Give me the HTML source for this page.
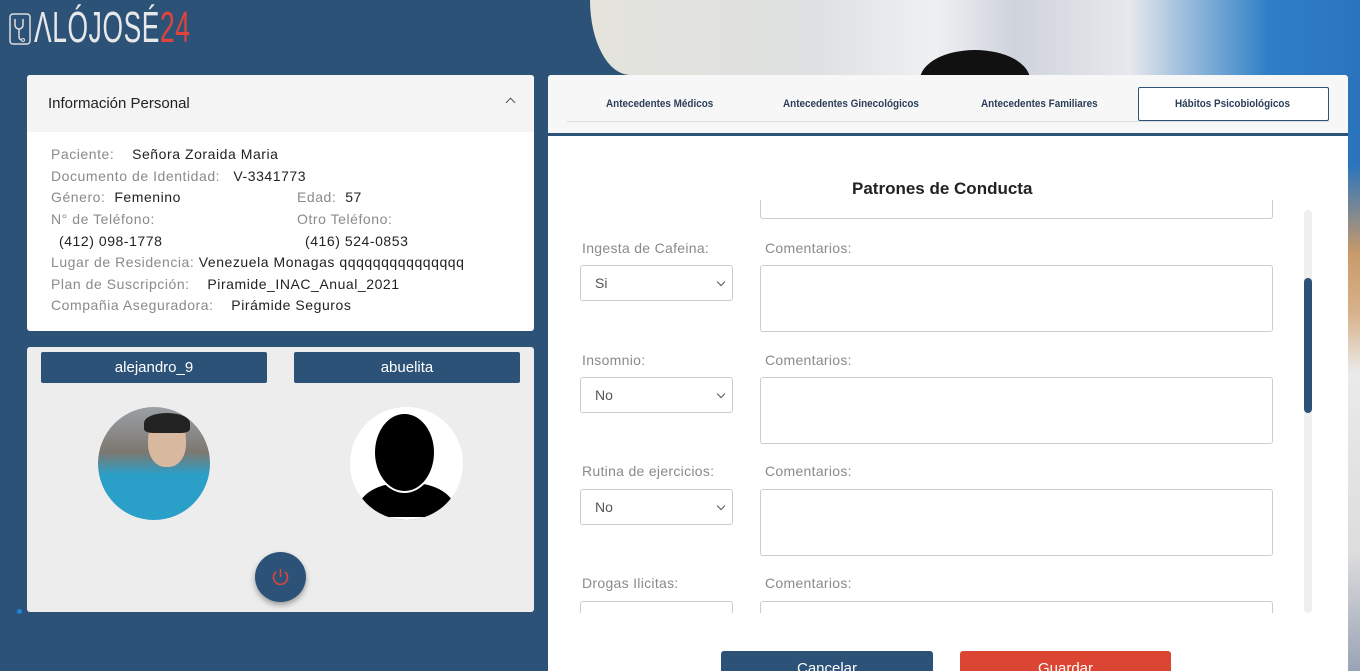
<!DOCTYPE html>
<html><head><meta charset="utf-8"><style>
*{box-sizing:border-box;margin:0;padding:0}
html,body{width:1360px;height:671px;overflow:hidden}
body{background:#2c5278;font-family:"Liberation Sans","DejaVu Sans",sans-serif;position:relative}
.abs{position:absolute}
.lbl{color:#8a8a8a}
.info div{position:absolute;font-size:14px;color:#222;white-space:nowrap;letter-spacing:.55px}
.tab{position:absolute;top:98px;font-size:11px;color:#2c3e5a;font-weight:bold;transform:scaleX(.9);transform-origin:left}
.fl{position:absolute;font-size:14px;color:#8a8a8a;letter-spacing:.3px}
.sel{position:absolute;left:580px;width:153px;height:36px;border:1px solid #ccc;border-radius:3px;font-size:14px;color:#555;padding:9px 14px}
.sel:after{content:"";position:absolute;right:8px;top:13px;width:5px;height:5px;border-right:1.5px solid #555;border-bottom:1.5px solid #555;transform:rotate(45deg)}
.ta{position:absolute;left:760px;width:513px;height:67px;border:1px solid #ccc;border-radius:3px}
</style></head><body>
<div class="abs" style="left:590px;top:0;width:770px;height:75px;background:linear-gradient(90deg,#e4e3dc 0%,#dfe1e2 30%,#eef0f2 45%,#cfd3dc 55%,#e7e8ec 70%,#2f7fc6 88%,#2a74bd 100%);border-bottom-left-radius:40px 75px"></div>
<div class="abs" style="left:920px;top:50px;width:110px;height:60px;border-radius:50%;background:#111"></div>
<div class="abs" style="left:1348px;top:75px;width:12px;height:596px;background:linear-gradient(180deg,#2a74bd 0%,#2a74bd 15%,#c99a6a 30%,#d8b28a 40%,#eaeaea 50%,#ddd 80%,#9aa3b5 100%)"></div>
<svg class="abs" style="left:9px;top:13px" width="22" height="34" viewBox="0 0 22 34"><rect x="1" y="1" width="20" height="30" rx="3" fill="none" stroke="#ddd" stroke-width="1.5"/><path d="M6 6v6a4 4 0 0 0 8 0V6M10 16v8a3 3 0 0 0 3 3" fill="none" stroke="#ddd" stroke-width="1.5"/><circle cx="14" cy="27" r="1.5" fill="none" stroke="#ddd"/></svg>
<div class="abs" style="left:34px;top:3px;font-size:44px;line-height:50px;color:#e8e8e8;letter-spacing:1px;transform:scaleX(.6);transform-origin:left;font-weight:300">ΛLÓJOSÉ<span style="color:#e0443a">24</span></div>
<div class="abs" style="left:27px;top:75px;width:507px;height:256px;background:#fff;border-radius:3px;overflow:hidden">
<div style="height:57px;background:#f4f4f4;padding:20px 21px;font-size:15px;color:#222">Información Personal<span style="position:absolute;right:20px;width:7px;height:7px;border-left:1.5px solid #555;border-top:1.5px solid #555;transform:rotate(45deg);top:24px"></span></div>
</div>
<div class="info">
<div style="left:51px;top:146px"><span class="lbl">Paciente:</span>&nbsp;&nbsp;&nbsp; Señora Zoraida Maria</div>
<div style="left:51px;top:168px"><span class="lbl">Documento de Identidad:</span>&nbsp;&nbsp; V-3341773</div>
<div style="left:51px;top:189px"><span class="lbl">Género:</span>&nbsp; Femenino</div>
<div style="left:297px;top:189px"><span class="lbl">Edad:</span>&nbsp; 57</div>
<div style="left:51px;top:211px"><span class="lbl">N° de Teléfono:</span></div>
<div style="left:297px;top:211px"><span class="lbl">Otro Teléfono:</span></div>
<div style="left:59px;top:233px">(412) 098-1778</div>
<div style="left:305px;top:233px">(416) 524-0853</div>
<div style="left:51px;top:254px"><span class="lbl">Lugar de Residencia:</span> Venezuela Monagas qqqqqqqqqqqqqqq</div>
<div style="left:51px;top:276px"><span class="lbl">Plan de Suscripción:</span>&nbsp;&nbsp;&nbsp; Piramide_INAC_Anual_2021</div>
<div style="left:51px;top:297px"><span class="lbl">Compañia Aseguradora:</span>&nbsp;&nbsp;&nbsp; Pirámide Seguros</div>
</div>
<div class="abs" style="left:27px;top:347px;width:507px;height:265px;background:#ededed;border-radius:3px"></div>
<div class="abs" style="left:41px;top:352px;width:226px;height:31px;background:#2c5278;border-radius:2px;color:#fff;font-size:15px;text-align:center;line-height:31px">alejandro_9</div>
<div class="abs" style="left:294px;top:352px;width:226px;height:31px;background:#2c5278;border-radius:2px;color:#fff;font-size:15px;text-align:center;line-height:31px">abuelita</div>
<div class="abs" style="left:98px;top:407px;width:112px;height:113px;border-radius:50%;overflow:hidden;background:linear-gradient(180deg,#9aa0a6 0%,#7d7870 40%,#2a9fc8 60%,#2a9fc8 100%)"><div style="position:absolute;left:50px;top:10px;width:38px;height:50px;border-radius:45%;background:#d9b8a0"></div><div style="position:absolute;left:46px;top:6px;width:46px;height:20px;border-radius:50% 50% 20% 20%;background:#222"></div></div>
<div class="abs" style="left:350px;top:407px;width:113px;height:113px;border-radius:50%;overflow:hidden;background:#fff"><div style="position:absolute;left:8px;top:76px;width:97px;height:60px;border-radius:45% 45% 0 0;background:#000"></div><div style="position:absolute;left:23px;top:5px;width:63px;height:81px;border-radius:50%;background:#fff"></div><div style="position:absolute;left:25px;top:7px;width:59px;height:77px;border-radius:50%;background:#000"></div><div style="position:absolute;left:0;top:110px;width:113px;height:10px;background:#fff"></div></div>
<div class="abs" style="left:255px;top:552px;width:51px;height:50px;border-radius:50%;background:#2c5278;box-shadow:0 3px 6px rgba(0,0,0,.35)"><svg width="51" height="50" viewBox="0 0 51 50"><path d="M21 20a7 7 0 1 0 9 0" fill="none" stroke="#e0443a" stroke-width="1.6"/><path d="M25.5 17v8" stroke="#e0443a" stroke-width="1.6"/></svg></div>
<div class="abs" style="left:17px;top:609px;width:5px;height:5px;border-radius:50%;background:#1c86d6"></div>
<div class="abs" style="left:548px;top:75px;width:800px;height:596px;background:#fff;border-radius:3px 3px 0 0"></div>
<div class="abs" style="left:548px;top:75px;width:800px;height:58px;background:#f7f7f7;border-radius:3px 3px 0 0"></div>
<div class="abs" style="left:567px;top:121px;width:762px;height:1px;background:#ddd"></div>
<div class="abs" style="left:548px;top:133px;width:800px;height:3px;background:#2c5278"></div>
<div class="abs" style="left:1138px;top:87px;width:191px;height:34px;border:1px solid #2c5278;border-radius:2px;background:#fff"></div>
<div class="tab" style="left:606px">Antecedentes Médicos</div>
<div class="tab" style="left:783px">Antecedentes Ginecológicos</div>
<div class="tab" style="left:981px">Antecedentes Familiares</div>
<div class="tab" style="left:1175px">Hábitos Psicobiológicos</div>
<div class="abs" style="left:852px;top:179px;font-size:17px;font-weight:bold;color:#222">Patrones de Conducta</div>
<div class="abs" style="left:760px;top:200px;width:513px;height:19px;border:1px solid #ccc;border-top:none;border-radius:0 0 3px 3px"></div>
<div class="abs" style="left:1304px;top:210px;width:8px;height:403px;background:#efefef;border-radius:4px"></div>
<div class="abs" style="left:1304px;top:278px;width:8px;height:135px;background:#2c5278;border-radius:4px"></div>
<div class="fl" style="left:582px;top:240px">Ingesta de Cafeina:</div><div class="fl" style="left:765px;top:240px">Comentarios:</div>
<div class="sel" style="top:265px">Si</div><div class="ta" style="top:265px"></div>
<div class="fl" style="left:582px;top:352px">Insomnio:</div><div class="fl" style="left:765px;top:352px">Comentarios:</div>
<div class="sel" style="top:377px">No</div><div class="ta" style="top:377px"></div>
<div class="fl" style="left:582px;top:463px">Rutina de ejercicios:</div><div class="fl" style="left:765px;top:463px">Comentarios:</div>
<div class="sel" style="top:489px">No</div><div class="ta" style="top:489px"></div>
<div class="fl" style="left:582px;top:575px">Drogas Ilicitas:</div><div class="fl" style="left:765px;top:575px">Comentarios:</div>
<div class="abs" style="left:580px;top:601px;width:153px;height:12px;border:1px solid #ccc;border-bottom:none;border-radius:3px 3px 0 0"></div>
<div class="abs" style="left:760px;top:601px;width:513px;height:12px;border:1px solid #ccc;border-bottom:none;border-radius:3px 3px 0 0"></div>
<div class="abs" style="left:721px;top:651px;width:212px;height:20px;background:#2c5278;border-radius:3px 3px 0 0;color:#fff;font-size:15px;text-align:center;padding-top:9px;overflow:hidden">Cancelar</div>
<div class="abs" style="left:960px;top:651px;width:211px;height:20px;background:#da4632;border-radius:3px 3px 0 0;color:#fff;font-size:15px;text-align:center;padding-top:9px;overflow:hidden">Guardar</div>
</body></html>
